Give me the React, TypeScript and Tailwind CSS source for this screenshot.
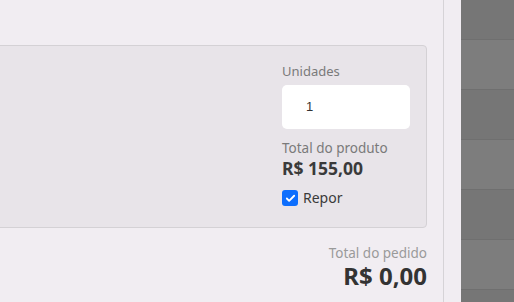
import { Check } from 'lucide-react';

const stripes = ['h-[40px]', 'h-[50px]', 'h-[50px]', 'h-[50px]', 'h-[50px]', 'h-[50px]', 'h-[50px]'];

const App = () => {
  return (
    <div className="flex h-[302px] w-[514px] overflow-hidden bg-[#f1edf2]" style={{ fontFamily: '"Noto Sans", "Open Sans", sans-serif' }}>
      {/* Modal body */}
      <div className="flex w-[444px] shrink-0 flex-col border-r border-[#d6d3d7] pt-[45px]">
        <div className="-ml-[10px] mr-[16px] flex justify-end rounded-sm border border-[#d4d1d5] bg-[#e8e4e9] pb-[20px] pr-[16px] pt-[16px]">
          <div className="flex w-[128px] flex-col">
            <span className="text-[13px] leading-[18px] text-[#7a7a7a]">Unidades</span>
            <div className="mt-[5px] flex h-[44px] items-center rounded-[5px] bg-white pl-[24px]">
              <span className="text-[13px] text-[#333]" style={{ fontFamily: '"Liberation Sans", Arial, sans-serif' }}>1</span>
            </div>
            <span className="mt-[10px] text-[13.5px] leading-[18px] text-[#7a7a7a]">Total do produto</span>
            <span className="text-[17.5px] font-bold leading-[22px] text-[#3a3a3a]">R$ 155,00</span>
            <label className="mt-[10px] flex items-center gap-[5px]">
              <span className="flex h-[16px] w-[16px] items-center justify-center rounded-[3px] bg-[#0d6efd]">
                <Check className="h-[11px] w-[11px] text-white" strokeWidth={4} />
              </span>
              <span className="text-[14px] leading-[18px] text-[#3a3a3a]">Repor</span>
            </label>
          </div>
        </div>
        <div className="mr-[16px] mt-[16px] flex flex-col items-end">
          <span className="text-[13.5px] leading-[18px] text-[#9a9a9a]">Total do pedido</span>
          <span className="text-[24px] font-bold leading-[28px] text-[#333]">R$ 0,00</span>
        </div>
      </div>
      <div className="w-[17px] shrink-0" />
      {/* Dimmed table behind */}
      <div className="flex flex-1 flex-col">
        {stripes.map((h, i) => (
          <div key={i} className={`${h} shrink-0 border-b border-[#6f6f6f] ${i % 2 === 0 ? 'bg-[#767676]' : 'bg-[#7d7d7d]'}`} />
        ))}
      </div>
    </div>
  );
};

export default App;
